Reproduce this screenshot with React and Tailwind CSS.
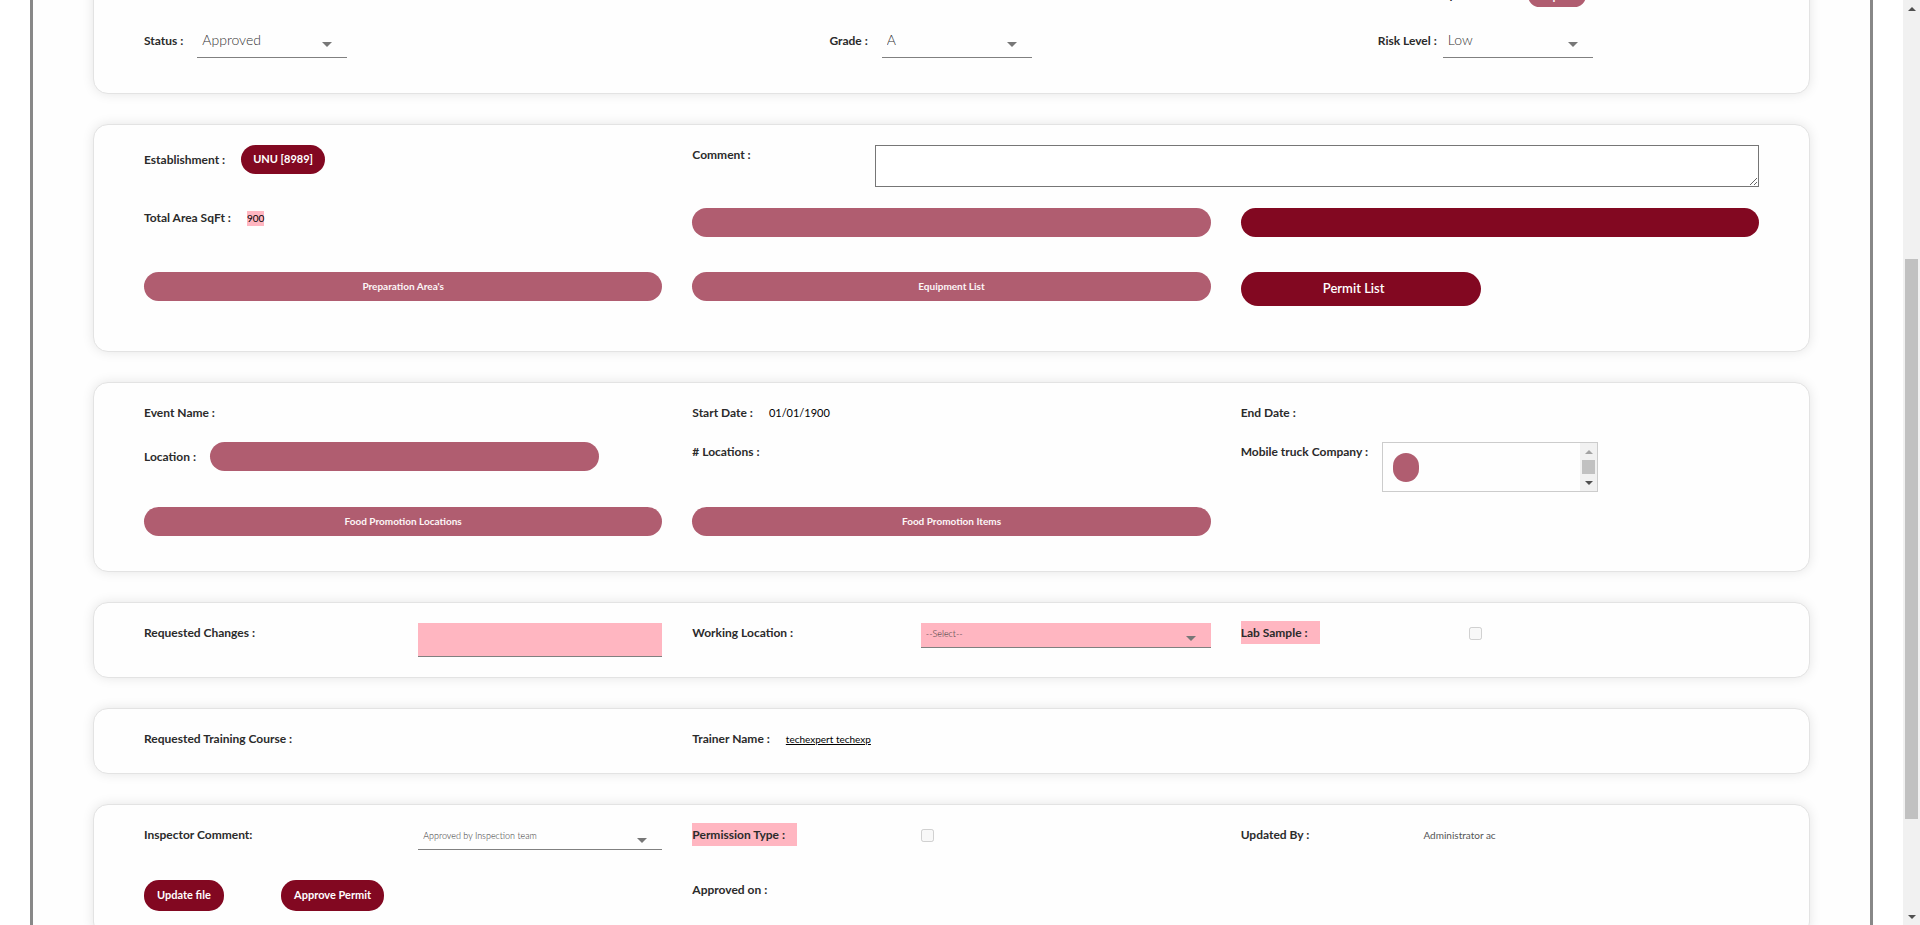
import clsx from "clsx";

function Card({ children, className }) {
  return (
    <section
      className={clsx(
        "flex flex-col rounded-[15px] border border-[#e3e3e3] bg-[#fefefe] px-[50px] pt-5 shadow-[0_0_12px_rgba(0,0,0,0.1)]",
        className
      )}
    >
      {children}
    </section>
  );
}

function Row({ children, className }) {
  return <div className={clsx("grid grid-cols-12 items-start gap-x-[30px]", className)}>{children}</div>;
}

function Label({ children, className, htmlFor, marked, leading = "leading-5" }) {
  const Tag = htmlFor ? "label" : "span";
  return (
    <Tag htmlFor={htmlFor} className={clsx("text-[12px] font-bold whitespace-nowrap text-[#2b2b2b]", leading, className)}>
      {marked ? <span className="bg-[#ffb6c1] py-1 pr-3">{children}</span> : children}
    </Tag>
  );
}

function Bar({ children, dark, label, className, size = "h-[29px] text-[10px]" }) {
  return (
    <button
      type="button"
      disabled={!dark}
      aria-label={label}
      className={clsx(
        "rounded-[15px] font-bold",
        size,
        dark ? "bg-[#820821] text-white" : "bg-[#b05d70] text-[#fdf6f7]",
        className
      )}
    >
      {children}
    </button>
  );
}

function Picker({ id, value, large, marked, className }) {
  return (
    <div className={clsx("relative", className)}>
      <select
        id={id}
        defaultValue={value}
        className={clsx(
          "block w-full appearance-none border-b border-[#808080] pl-[5px] font-light text-[#333]",
          large ? "h-8 pb-1 text-[14px]" : "h-[25px] pb-0.5 text-[9px]",
          marked && "bg-[#ffb6c1]"
        )}
      >
        <option>{value}</option>
      </select>
      <svg viewBox="0 0 10 5" className="pointer-events-none absolute top-1/2 right-[15px] h-[5px] w-2.5 fill-[#777]">
        <path d="M0 0h10L5 5z" />
      </svg>
    </div>
  );
}

function Arrow({ down, muted }) {
  return (
    <span className="flex h-[17px] shrink-0 items-center justify-center">
      <svg viewBox="0 0 8 4" className={clsx("h-1 w-2", muted ? "fill-[#a3a3a3]" : "fill-[#505050]")}>
        <path d={down ? "M0 0h8L4 4z" : "M0 4h8L4 0z"} />
      </svg>
    </span>
  );
}

export default function App() {
  return (
    <div className="flex h-screen overflow-hidden bg-white font-['Lato','Noto_Sans',sans-serif]">
      <main className="min-w-0 flex-1 overflow-hidden">
        <form className="mx-[30px] -mt-[43px] flex min-h-[calc(100vh+43px)] flex-col gap-[30px] border-x-[3px] border-[#888] bg-[#fefefe] px-[60px] pb-8">
          <Card className="pb-[35px]">
            <Row className="mb-[19px]">
              <div className="col-span-3 col-start-10 flex h-[29px] items-end">
                <Label className="min-w-[150px]" leading="leading-6">Download Report :</Label>
                <Bar size="h-[23px] text-[12px]" className="px-[11px]">Report</Bar>
              </div>
            </Row>
            <Row>
              <div className="col-span-5 flex gap-[14px]">
                <Label htmlFor="status" leading="leading-[30px]">Status :</Label>
                <Picker id="status" value="Approved" large className="w-[150px]" />
              </div>
              <div className="col-span-4 flex gap-[14px]">
                <Label htmlFor="grade" leading="leading-[30px]">Grade :</Label>
                <Picker id="grade" value="A" large className="w-[150px]" />
              </div>
              <div className="col-span-3 flex gap-1.5">
                <Label htmlFor="risk" leading="leading-[30px]">Risk Level :</Label>
                <Picker id="risk" value="Low" large className="w-[150px]" />
              </div>
            </Row>
          </Card>

          <Card className="pb-[45px]">
            <Row className="mb-[21px]">
              <div className="col-span-4 flex items-center gap-4">
                <Label>Establishment :</Label>
                <Bar dark size="h-[29px] text-[11px]" className="px-3">UNU [8989]</Bar>
              </div>
              <div className="col-span-8 grid grid-cols-6 items-start gap-x-[30px]">
                <Label htmlFor="comment">Comment :</Label>
                <textarea id="comment" className="col-span-5 block h-[42px] border border-[#767676] bg-white" />
              </div>
            </Row>
            <Row className="mb-[35px]">
              <div className="col-span-4 flex items-center gap-4">
                <Label>Total Area SqFt :</Label>
                <span className="bg-[#ffb6c1] text-[10px] leading-[15px] text-black">900</span>
              </div>
              <Bar label="Area details" className="col-span-4" />
              <Bar dark label="Permit details" className="col-span-4" />
            </Row>
            <Row>
              <Bar className="col-span-4">Preparation Area's</Bar>
              <Bar className="col-span-4">Equipment List</Bar>
              <div className="col-span-4">
                <button type="button" className="block h-[34px] w-60 rounded-[17px] bg-[#820821] pr-3.5 text-[13px] font-semibold text-white">
                  Permit List
                </button>
              </div>
            </Row>
          </Card>

          <Card className="pb-[35px]">
            <Row className="mb-[19px]">
              <Label className="col-span-4">Event Name :</Label>
              <div className="col-span-4 flex items-center gap-4">
                <Label>Start Date :</Label>
                <span className="text-[11px] leading-5 text-black">01/01/1900</span>
              </div>
              <Label className="col-span-4">End Date :</Label>
            </Row>
            <Row className="mb-[15px]">
              <div className="col-span-4 flex items-center gap-[14px]">
                <Label>Location :</Label>
                <Bar label="Location" className="w-3/4" />
              </div>
              <Label className="col-span-4"># Locations :</Label>
              <div className="col-span-4 flex items-start gap-[14px]">
                <Label>Mobile truck Company :</Label>
                <div className="flex h-[50px] w-[216px] border border-[#ccc]">
                  <div className="flex-1 p-2.5">
                    <Bar label="Company" className="block w-[26px]" />
                  </div>
                  <div className="flex w-[17px] flex-col bg-[#f1f1f1]">
                    <Arrow muted />
                    <span className="mx-0.5 flex-1 bg-[#c1c1c1]" />
                    <Arrow down />
                  </div>
                </div>
              </div>
            </Row>
            <Row>
              <Bar className="col-span-4">Food Promotion Locations</Bar>
              <Bar className="col-span-4">Food Promotion Items</Bar>
            </Row>
          </Card>

          <Card className="pb-5">
            <Row>
              <div className="col-span-4 grid grid-cols-2 items-start gap-x-[30px]">
                <Label htmlFor="changes">Requested Changes :</Label>
                <input id="changes" className="h-[34px] w-full border-b border-[#808080] bg-[#ffb6c1]" />
              </div>
              <div className="col-span-4 grid grid-cols-12 items-start gap-x-[30px]">
                <Label htmlFor="working" className="col-span-5">Working Location :</Label>
                <Picker id="working" value="--Select--" marked className="col-span-7" />
              </div>
              <div className="col-span-4 grid grid-cols-12 items-start gap-x-[30px]">
                <Label htmlFor="sample" marked className="col-span-5">Lab Sample :</Label>
                <input id="sample" type="checkbox" disabled className="mt-1 size-[13px]" />
              </div>
            </Row>
          </Card>

          <Card className="pb-6">
            <Row>
              <Label className="col-span-4">Requested Training Course :</Label>
              <div className="col-span-4 flex items-center gap-4">
                <Label>Trainer Name :</Label>
                <a href="#trainer" className="text-[10px] leading-5 text-black underline">techexpert techexp</a>
              </div>
            </Row>
          </Card>

          <Card className="pb-[25px]">
            <Row className="mb-[30px]">
              <div className="col-span-4 grid grid-cols-2 items-start gap-x-[30px]">
                <Label htmlFor="inspector">Inspector Comment:</Label>
                <Picker id="inspector" value="Approved by Inspection team" />
              </div>
              <div className="col-span-4 grid grid-cols-12 items-start gap-x-[30px]">
                <Label htmlFor="permission" marked className="col-span-5">Permission Type :</Label>
                <input id="permission" type="checkbox" disabled className="mt-1 size-[13px]" />
              </div>
              <div className="col-span-4 grid grid-cols-3 items-start gap-x-[30px]">
                <Label>Updated By :</Label>
                <span className="text-[10px] leading-5 text-[#555]">Administrator ac</span>
              </div>
            </Row>
            <Row>
              <div className="col-span-4 grid grid-cols-4 gap-x-[30px]">
                <div>
                  <Bar dark size="h-[31px] text-[11px]" className="px-[13px] whitespace-nowrap">Update file</Bar>
                </div>
                <div>
                  <Bar dark size="h-[31px] text-[11px]" className="px-[13px] whitespace-nowrap">Approve Permit</Bar>
                </div>
              </div>
              <Label className="col-span-4">Approved on :</Label>
            </Row>
          </Card>
        </form>
      </main>

      <div aria-hidden="true" className="flex w-[17px] shrink-0 flex-col bg-[#f1f1f1]">
        <Arrow />
        <span className="grow-[242]" />
        <span className="mx-0.5 grow-[560] bg-[#c1c1c1]" />
        <span className="grow-[89]" />
        <Arrow down />
      </div>
    </div>
  );
}
